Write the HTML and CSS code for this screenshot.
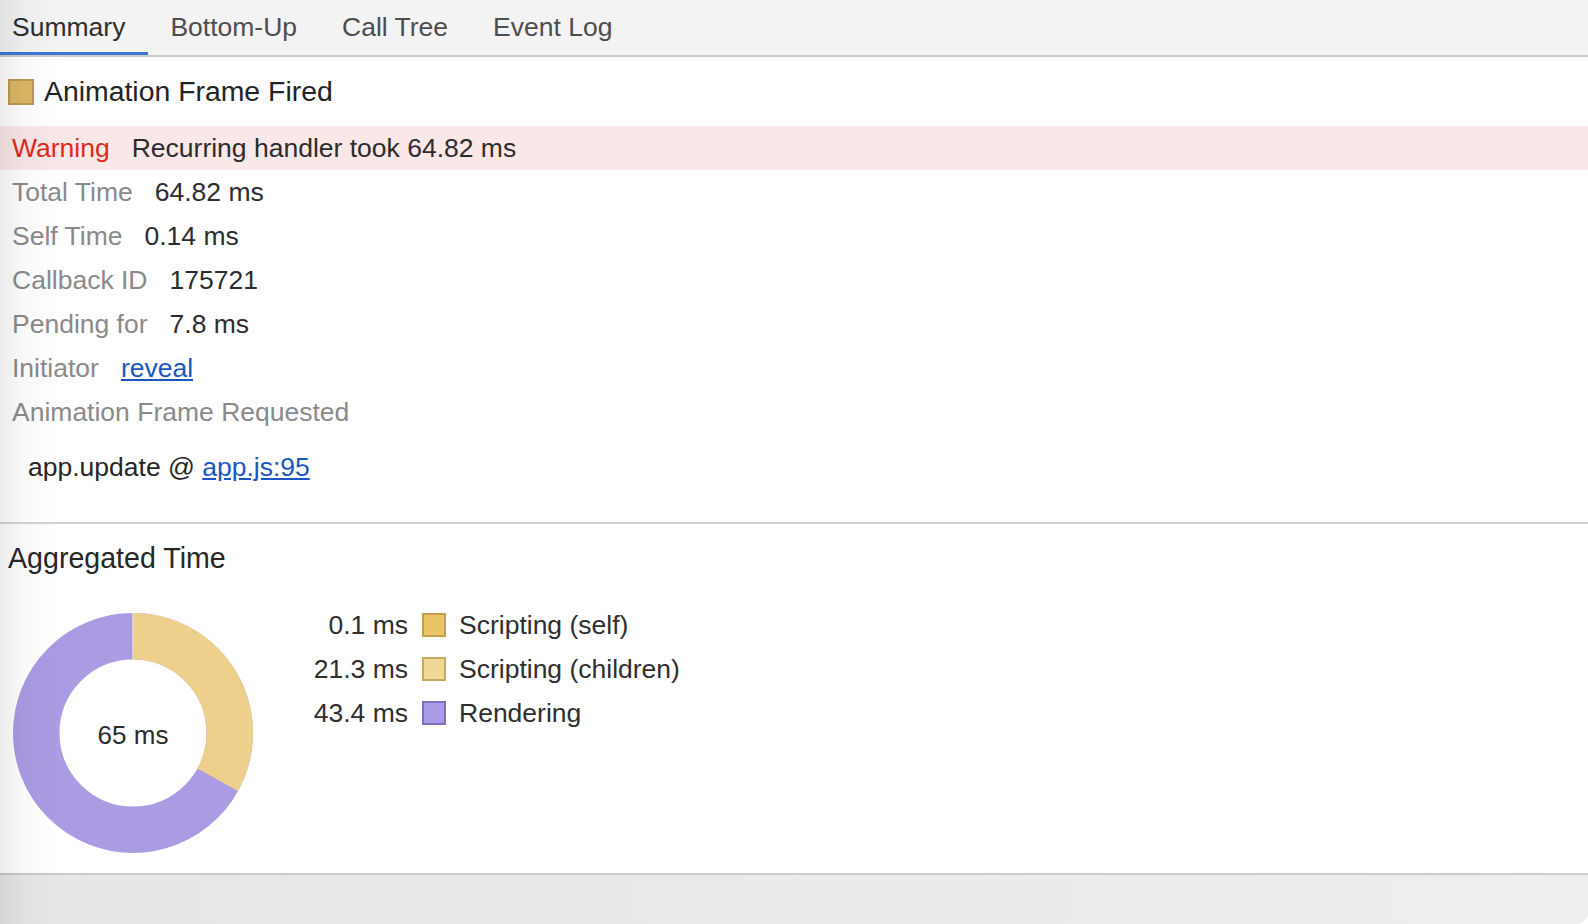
FILE: index.html
```html
<!DOCTYPE html>
<html lang="en">
<head>
<meta charset="utf-8">
<title>Summary</title>
<link rel="stylesheet" href="styles.css">
</head>
<body>
<div class="page">
  <nav class="tabs">
    <div class="tab active">Summary</div>
    <div class="tab">Bottom-Up</div>
    <div class="tab">Call Tree</div>
    <div class="tab">Event Log</div>
  </nav>

  <section class="details">
    <div class="title-row"><span class="title-swatch"></span><span>Animation Frame Fired</span></div>
    <div class="row warning"><span class="label">Warning</span><span class="value">Recurring handler took 64.82 ms</span></div>
    <div class="row"><span class="label">Total Time</span><span class="value">64.82 ms</span></div>
    <div class="row"><span class="label">Self Time</span><span class="value">0.14 ms</span></div>
    <div class="row"><span class="label">Callback ID</span><span class="value">175721</span></div>
    <div class="row"><span class="label">Pending for</span><span class="value">7.8 ms</span></div>
    <div class="row"><span class="label">Initiator</span><a class="link" href="#">reveal</a></div>
    <div class="row"><span class="label">Animation Frame Requested</span></div>
    <div class="stack">app.update @ <a class="link" href="#">app.js:95</a></div>
  </section>

  <section class="aggregated">
    <div class="agg-title">Aggregated Time</div>
    <div class="chart-row">
      <svg class="donut" width="240" height="240" viewBox="0 0 240 240">
        <circle cx="120" cy="120" r="96.75" fill="none" stroke="#ab9be3" stroke-width="46.5"/>
        <circle cx="120" cy="120" r="96.75" fill="none" stroke="#ecd08c" stroke-width="46.5"
          stroke-dasharray="200.6 607.9" transform="rotate(-90 120 120)"/>
        <circle cx="120" cy="120" r="96.75" fill="none" stroke="#e6c266" stroke-width="46.5"
          stroke-dasharray="0.9 607.9" transform="rotate(-90 120 120)"/>
        <line x1="120" y1="0" x2="120" y2="47" stroke="#f4eee4" stroke-width="1"/>
        <text class="donut-text" x="120" y="124" text-anchor="middle" dominant-baseline="middle">65 ms</text>
      </svg>
      <div class="legend">
        <div class="legend-row"><span class="legend-value">0.1 ms</span><span class="legend-swatch self"></span><span>Scripting (self)</span></div>
        <div class="legend-row"><span class="legend-value">21.3 ms</span><span class="legend-swatch children"></span><span>Scripting (children)</span></div>
        <div class="legend-row"><span class="legend-value">43.4 ms</span><span class="legend-swatch rendering"></span><span>Rendering</span></div>
      </div>
    </div>
  </section>

  <footer class="footer"></footer>
</div>
</body>
</html>
```

FILE: styles.css
```css
html, body {
  margin: 0;
  padding: 0;
  background: #ffffff;
}

body {
  font-family: "Liberation Sans", Arial, Helvetica, sans-serif;
  color: #303030;
}

.page {
  position: relative;
  width: 1588px;
  height: 924px;
  display: flex;
  flex-direction: column;
  overflow: hidden;
  border-bottom-right-radius: 12px;
  background: #ffffff;
}

.page::before {
  content: "";
  position: absolute;
  left: 0;
  top: 0;
  bottom: 0;
  width: 70px;
  background: linear-gradient(to right, rgba(0, 0, 0, 0.075), rgba(0, 0, 0, 0.025) 25px, rgba(0, 0, 0, 0) 60px);
  pointer-events: none;
  z-index: 2;
}

/* Tabs */
.tabs {
  display: flex;
  height: 55px;
  background: #f3f3f3;
  border-bottom: 2px solid #cbcbcb;
  flex: none;
}

.tab {
  display: flex;
  align-items: center;
  padding: 0 22.5px;
  font-size: 26.5px;
  color: #4d4d4d;
}

.tab:first-child {
  padding-left: 12px;
}

.tab.active {
  color: #2e2e2e;
  box-shadow: inset 0 -3px 0 #3b78d8;
}

/* Details */
.details {
  flex: none;
}

.title-row {
  height: 69px;
  display: flex;
  align-items: center;
  padding-left: 8px;
  font-size: 28.4px;
  color: #232323;
}

.title-swatch {
  width: 22px;
  height: 22px;
  border: 2px solid #b89a52;
  background: #dcb864;
  margin-right: 10px;
  flex: none;
}

.row {
  height: 44px;
  display: flex;
  align-items: center;
  padding-left: 12px;
  font-size: 26.5px;
}

.row.warning {
  background: #fae7e7;
}

.label {
  color: #8a8a8a;
  margin-right: 22px;
}

.warning .label {
  color: #e0281c;
}

.value {
  color: #2c2c2c;
}

.link {
  color: #1a55c4;
  text-decoration: underline;
}

.stack {
  padding: 11px 0 33px 28px;
  font-size: 26.5px;
  line-height: 44px;
  color: #262626;
}

/* Aggregated */
.aggregated {
  flex: none;
  border-top: 2px solid #d2d2d2;
  padding: 12px 0 20px 8px;
}

.agg-title {
  font-size: 28.6px;
  line-height: 44px;
  color: #262626;
}

.chart-row {
  display: flex;
  align-items: flex-start;
  margin-top: 23px;
}

.donut {
  display: block;
  margin-top: 10px;
  margin-left: 5px;
  flex: none;
}

.donut-text {
  font-family: "Liberation Sans", Arial, sans-serif;
  font-size: 26px;
  fill: #2a2a2a;
}

.legend {
  margin-left: 45px;
  display: flex;
  flex-direction: column;
}

.legend-row {
  height: 44px;
  display: flex;
  align-items: center;
  font-size: 26.5px;
  color: #2e2e2e;
}

.legend-value {
  width: 110px;
  text-align: right;
}

.legend-swatch {
  width: 20px;
  height: 20px;
  border: 2px solid;
  margin: 0 13px 0 14px;
  flex: none;
}

.legend-swatch.self {
  background: #eac566;
  border-color: #c2a04f;
}

.legend-swatch.children {
  background: #f0d898;
  border-color: #c6aa63;
}

.legend-swatch.rendering {
  background: #ab9be6;
  border-color: #7f70c0;
}

/* Footer */
.footer {
  flex: 1;
  border-top: 2px solid #cbcbcb;
  background: linear-gradient(to right, #e6e6e6, #ebebeb 60%, #eeeeee);
}
```
